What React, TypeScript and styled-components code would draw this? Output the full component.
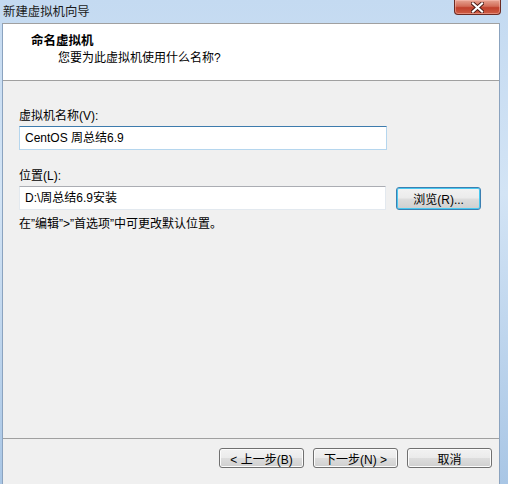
import React from 'react';
import styled, { createGlobalStyle } from 'styled-components';

const GlobalStyle = createGlobalStyle`
  html, body {
    margin: 0;
    padding: 0;
    background: #ffffff;
  }

  body {
    font-family: "Liberation Sans", "Noto Sans CJK SC", sans-serif;
    font-size: 12px;
    color: #000000;
  }
`;

const Window = styled('div')`
  background: linear-gradient(180deg, #c4daf1 0%, #d3e4f5 40%, #a9c6e5 100%);
  display: flex;
  flex-direction: column;
  height: 484px;
  overflow: hidden;
  width: 508px;
`;

const TitleBar = styled('div')`
  align-items: flex-start;
  display: flex;
  height: 23px;
  justify-content: space-between;
  padding-left: 3px;
  padding-right: 7px;
`;

const TitleText = styled('span')`
  color: #1a1a1a;
  font-family: "Noto Sans CJK SC", sans-serif;
  font-size: 12.4px;
  line-height: 14px;
  padding-top: 4px;
`;

const CloseButton = styled('div')`
  align-items: center;
  background: linear-gradient(180deg, #e7a493 0%, #d26c58 45%, #c0402c 55%, #cf5d44 100%);
  border: 1px solid #6b2a22;
  border-radius: 0 0 4px 4px;
  border-top: none;
  box-shadow: inset 0 0 0 1px rgba(255, 200, 190, 0.45);
  box-sizing: border-box;
  display: flex;
  height: 15px;
  justify-content: center;
  width: 47px;
`;

const Client = styled('div')`
  background: #f0f0f0;
  border-left: 1px solid #8ba3bf;
  border-right: 1px solid #8ba3bf;
  border-top: 1px solid #a0a0a0;
  display: flex;
  flex: 1;
  flex-direction: column;
  margin-left: 2px;
  margin-right: 8px;
`;

const Header = styled('div')`
  background: #ffffff;
  border-bottom: 1px solid #a0a0a0;
  box-sizing: border-box;
  height: 57px;
  padding-left: 28px;
  padding-top: 7px;
`;

const HeaderTitle = styled('div')`
  font-family: "Noto Sans CJK SC", sans-serif;
  font-size: 12.5px;
  font-weight: 700;
  line-height: 17px;
`;

const HeaderSubtitle = styled('div')`
  line-height: 17px;
  margin-top: 2px;
  padding-left: 27px;
`;

const Body = styled('div')`
  display: flex;
  flex: 1;
  flex-direction: column;
  padding-left: 16px;
  padding-right: 18px;
  padding-top: 27px;
`;

const FieldLabel = styled('label')`
  display: block;
  line-height: 16px;
`;

const Row = styled('div')`
  align-items: center;
  display: flex;
  gap: 10px;
  margin-top: 2px;
`;

const TextBox = styled('div')<{ $focused?: boolean }>`
  background: #ffffff;
  border: 1px solid ${ (p) => (p.$focused ? '#b5d6ee' : '#e3e9ef') };
  border-top-color: ${ (p) => (p.$focused ? '#3d7bad' : '#abadb3') };
  box-sizing: border-box;
  height: 24px;
  line-height: 22px;
  padding-left: 5px;
  width: 368px;
`;

const Spacer = styled('div')<{ $h: number }>`
  height: ${ (p) => p.$h }px;
`;

const Hint = styled('div')`
  line-height: 16px;
  margin-top: 6px;
`;

const Quote = styled('span')`
  font-family: "Liberation Sans", sans-serif;
`;

const Button = styled('div')<{ $default?: boolean }>`
  align-items: center;
  background: linear-gradient(180deg, #f2f2f2 0%, #ebebeb 48%, #dddddd 52%, #cfcfcf 100%);
  border: 1px solid ${ (p) => (p.$default ? '#3c7fb1' : '#707070') };
  border-radius: 3px;
  box-shadow: ${ (p) => (p.$default ? 'inset 0 0 0 1px #48c8f0' : 'inset 0 0 0 1px #fcfcfc') };
  box-sizing: border-box;
  display: flex;
  height: ${ (p) => (p.$default ? 23 : 20) }px;
  justify-content: center;
  width: 85px;
`;

const Footer = styled('div')`
  border-top: 1px solid #a0a0a0;
  display: flex;
  gap: 9px;
  height: 36px;
  justify-content: flex-end;
  padding-right: 7px;
  padding-top: 9px;
`;

const App: React.FC = () => {
  return (
    <>
      <GlobalStyle />
      <Window>
        <TitleBar>
          <TitleText>新建虚拟机向导</TitleText>
          <CloseButton>
            <svg width='13' height='11' viewBox='0 0 13 11'>
              <path
                d='M2 1.5 L11 9.5 M11 1.5 L2 9.5'
                stroke='#4a1a14'
                strokeWidth='4'
                strokeLinecap='square'
              />
              <path
                d='M2 1.5 L11 9.5 M11 1.5 L2 9.5'
                stroke='#ffffff'
                strokeWidth='2.2'
                strokeLinecap='square'
              />
            </svg>
          </CloseButton>
        </TitleBar>
        <Client>
          <Header>
            <HeaderTitle>命名虚拟机</HeaderTitle>
            <HeaderSubtitle>您要为此虚拟机使用什么名称?</HeaderSubtitle>
          </Header>
          <Body>
            <FieldLabel>虚拟机名称(V):</FieldLabel>
            <Row>
              <TextBox $focused>CentOS 周总结6.9</TextBox>
            </Row>
            <Spacer $h={ 18 } />
            <FieldLabel>位置(L):</FieldLabel>
            <Row>
              <TextBox>D:\周总结6.9安装</TextBox>
              <Button $default>浏览(R)...</Button>
            </Row>
            <Hint>
              在<Quote>”</Quote>编辑<Quote>”</Quote>&gt;<Quote>”</Quote>首选项<Quote>”</Quote>中可更改默认位置。
            </Hint>
          </Body>
          <Footer>
            <Button>&lt; 上一步(B)</Button>
            <Button>下一步(N) &gt;</Button>
            <Button>取消</Button>
          </Footer>
        </Client>
      </Window>
    </>
  );
};

export default App;
